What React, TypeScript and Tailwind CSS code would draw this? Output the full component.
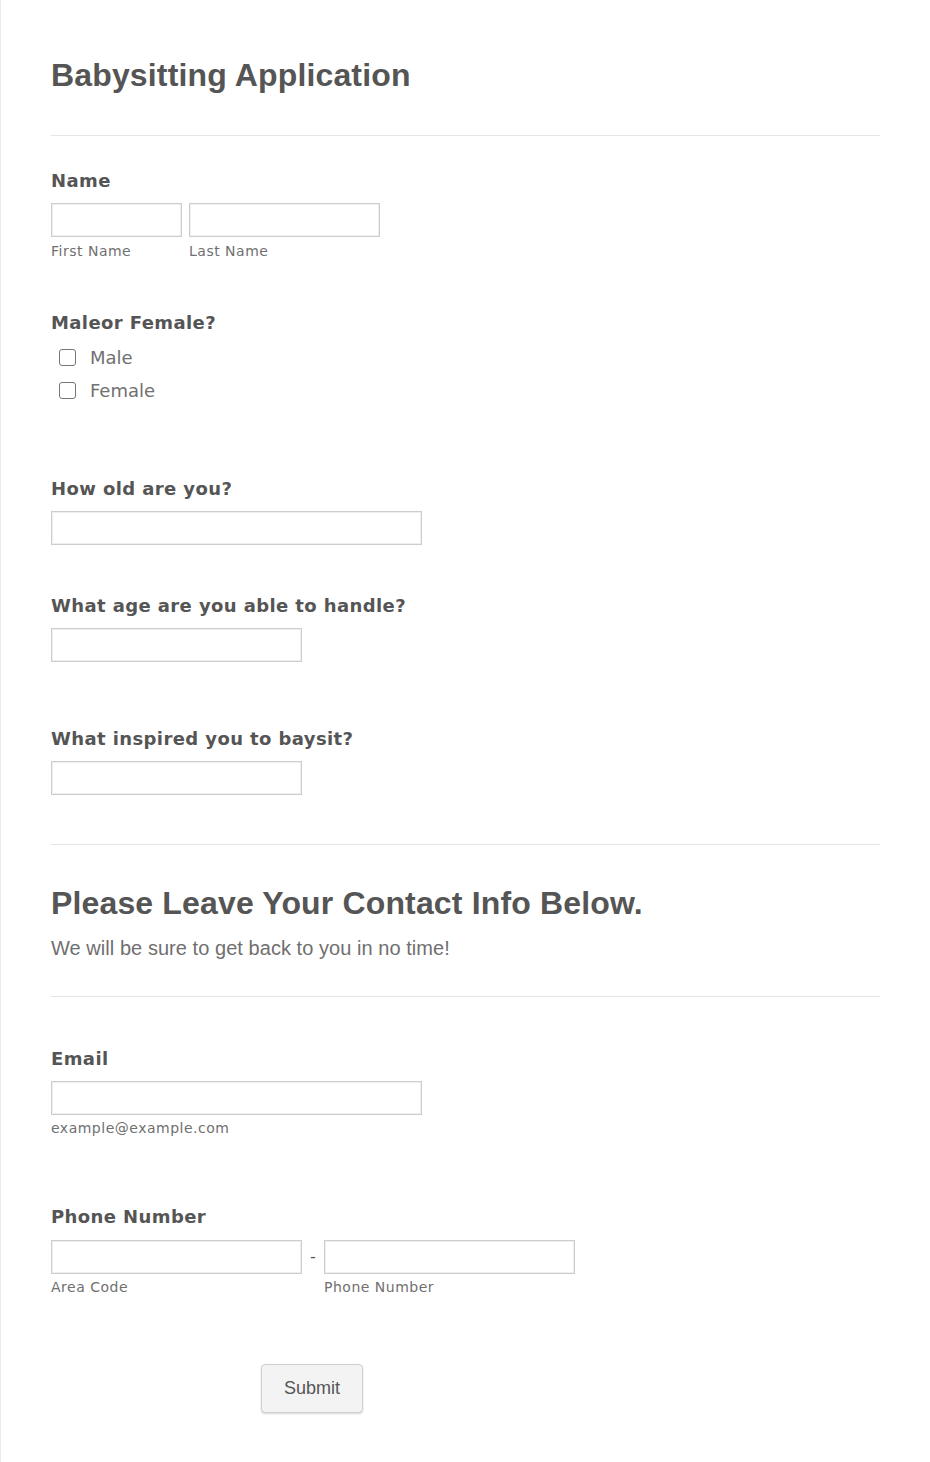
import React from "react";

const verdana = { fontFamily: '"DejaVu Sans", Verdana, sans-serif' };
const arial = { fontFamily: '"Liberation Sans", Arial, sans-serif' };

function Input({ w }: { w: string }) {
  return (
    <div
      className={`${w} h-[34px] border border-[#cdcdcd] bg-white shadow-[inset_0_0_0_1px_#efefef]`}
    />
  );
}

function Label({ children, mt }: { children: React.ReactNode; mt: string }) {
  return (
    <div className={`${mt} text-[18px] leading-[24px] font-bold tracking-[0.4px] text-[#555555]`} style={verdana}>
      {children}
    </div>
  );
}

function Sub({ children, mt = "mt-[5px]" }: { children: React.ReactNode; mt?: string }) {
  return (
    <div className={`${mt} text-[14px] leading-[18px] text-[#707070] tracking-[0.5px]`} style={verdana}>
      {children}
    </div>
  );
}

function Check({ label }: { label: string }) {
  return (
    <div className="flex h-[33px] items-center">
      <div className="ml-[8px] h-[17px] w-[17px] rounded-[3px] border-[1.5px] border-[#767676] bg-white" />
      <span className="ml-[14px] text-[18px] text-[#707070]" style={verdana}>
        {label}
      </span>
    </div>
  );
}

export default function App() {
  return (
    <div className="min-h-[1462px] w-[930px] border-l border-[#ebebeb] bg-white pl-[50px] pr-[50px] pt-[55px]">
      <h1 className="h-[40px] text-[32px] leading-[40px] font-bold tracking-[0.15px] text-[#555555]" style={arial}>
        Babysitting Application
      </h1>
      <div className="mt-[40px] h-px bg-[#e6e6e6]" />

      <Label mt="mt-[33px]">Name</Label>
      <div className="mt-[10px] flex gap-[7px]">
        <div className="w-[131px]">
          <Input w="w-[131px]" />
          <Sub>First Name</Sub>
        </div>
        <div className="w-[191px]">
          <Input w="w-[191px]" />
          <Sub>Last Name</Sub>
        </div>
      </div>

      <Label mt="mt-[51px]">Maleor Female?</Label>
      <div className="mt-[6px]">
        <Check label="Male" />
        <Check label="Female" />
      </div>

      <Label mt="mt-[70px]">How old are you?</Label>
      <div className="mt-[10px]">
        <Input w="w-[371px]" />
      </div>

      <Label mt="mt-[49px]">What age are you able to handle?</Label>
      <div className="mt-[10px]">
        <Input w="w-[251px]" />
      </div>

      <Label mt="mt-[65px]">What inspired you to baysit?</Label>
      <div className="mt-[10px]">
        <Input w="w-[251px]" />
      </div>

      <div className="mt-[49px] h-px bg-[#e6e6e6]" />

      <h2 className="mt-[38px] h-[40px] text-[32px] leading-[40px] font-bold tracking-[0.15px] text-[#555555]" style={arial}>
        Please Leave Your Contact Info Below.
      </h2>
      <p className="mt-[11px] text-[20px] leading-[28px] tracking-[0.05px] text-[#6f6f6f]" style={arial}>
        We will be sure to get back to you in no time!
      </p>

      <div className="mt-[34px] h-px bg-[#e6e6e6]" />

      <Label mt="mt-[50px]">Email</Label>
      <div className="mt-[10px]">
        <Input w="w-[371px]" />
        <Sub mt="mt-[4px]">example@example.com</Sub>
      </div>

      <Label mt="mt-[68px]">Phone Number</Label>
      <div className="mt-[11px] flex">
        <div className="w-[251px]">
          <Input w="w-[251px]" />
          <Sub mt="mt-[4px]">Area Code</Sub>
        </div>
        <div className="flex h-[34px] w-[22px] items-center justify-center text-[16px] text-[#555555]" style={verdana}>
          -
        </div>
        <div className="w-[251px]">
          <Input w="w-[251px]" />
          <Sub mt="mt-[4px]">Phone Number</Sub>
        </div>
      </div>

      <button
        className="ml-[210px] mt-[68px] h-[49px] w-[102px] rounded-[4px] border border-[#cfcfcf] bg-[#f3f3f3] text-[18px] text-[#555555] shadow-[0_1px_2px_rgba(0,0,0,0.15)]"
        style={arial}
      >
        Submit
      </button>
    </div>
  );
}
